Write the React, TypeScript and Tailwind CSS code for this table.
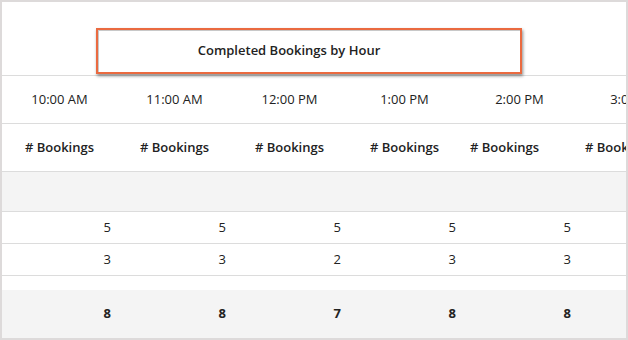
import React from 'react';

const times = ['10:00 AM', '11:00 AM', '12:00 PM', '1:00 PM', '2:00 PM', '3:00 PM'];
const firstRow = [5, 5, 5, 5, 5, ''];
const secondRow = [3, 3, 2, 3, 3, ''];
const totals = [8, 8, 7, 8, 8, ''];

function Cell({ children, className = '' }: { children?: React.ReactNode; className?: string }) {
    return <div className={`w-[115px] shrink-0 flex items-center ${className}`}>{children}</div>;
}

export default function App() {
    return (
        <div
            className="w-[628px] h-[340px] border-2 border-[#dddada] bg-white overflow-hidden text-[13px] text-[#222]"
            style={{ fontFamily: '"Open Sans", "Liberation Sans", sans-serif' }}
        >
            {/* TITLE */}
            <div className="h-[74px] border-b border-[#dcdcdc] flex justify-center">
                <div className="relative z-10 ml-[-10px] mt-[26px] w-[426px] h-[46px] pr-[40px] border-2 border-[#ea6a40] bg-white shadow-[inset_1px_1px_0_#c8c8c8,1px_2px_3px_rgba(0,0,0,0.45)] flex items-center justify-center font-semibold">
                    Completed Bookings by Hour
                </div>
            </div>

            {/* TIMES */}
            <div className="flex h-[48px] border-b border-[#dcdcdc]">
                {times.map((t) => (
                    <Cell key={t} className="justify-center">{t}</Cell>
                ))}
            </div>

            {/* COLUMN HEADERS */}
            <div className="flex h-[48px] border-b border-[#dcdcdc] font-semibold">
                {times.map((t, i) => (
                    <Cell key={t} className={i >= 4 ? 'pl-[8px]' : 'justify-center'}># Bookings</Cell>
                ))}
            </div>

            <div className="h-[40px] bg-[#f4f4f4] border-b border-[#dcdcdc]" />

            <div className="flex h-[32px] border-b border-[#dcdcdc]">
                {firstRow.map((v, i) => (
                    <Cell key={i} className="justify-end pr-[6px]">{v}</Cell>
                ))}
            </div>
            <div className="flex h-[32px] border-b border-[#dcdcdc]">
                {secondRow.map((v, i) => (
                    <Cell key={i} className="justify-end pr-[6px]">{v}</Cell>
                ))}
            </div>

            <div className="h-[14px]" />

            {/* TOTALS */}
            <div className="flex h-[48px] bg-[#f4f4f4] font-bold">
                {totals.map((v, i) => (
                    <Cell key={i} className="justify-end pr-[6px]">{v}</Cell>
                ))}
            </div>
        </div>
    );
}
